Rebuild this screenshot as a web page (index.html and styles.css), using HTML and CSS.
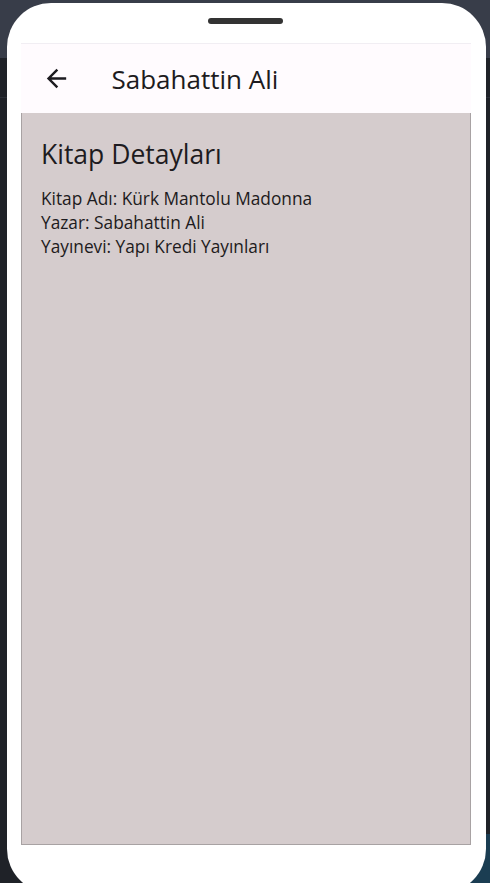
FILE: index.html
```html
<!DOCTYPE html>
<html lang="tr">
<head>
<meta charset="utf-8">
<link rel="stylesheet" href="styles.css">
</head>
<body>
<div class="desk">
  <div class="phone">
    <div class="notch"></div>
    <div class="screen">
      <header class="appbar">
        <svg class="back" viewBox="0 0 24 24" width="29" height="29"><path d="M20 11H7.83l5.59-5.59L12 4l-8 8 8 8 1.41-1.41L7.83 13H20v-2z"/></svg>
        <h1 class="title">Sabahattin Ali</h1>
      </header>
      <main class="content">
        <h2 class="heading">Kitap Detayları</h2>
        <p class="line">Kitap Adı: Kürk Mantolu Madonna</p>
        <p class="line">Yazar: Sabahattin Ali</p>
        <p class="line">Yayınevi: Yapı Kredi Yayınları</p>
      </main>
    </div>
  </div>
</div>
</body>
</html>
```
FILE: styles.css
```css
html, body {
  margin: 0;
  padding: 0;
  height: 883px;
  overflow: hidden;
}
body {
  background:
    linear-gradient(#383d49, #383d49) 0 0 / 100% 58px no-repeat,
    linear-gradient(#2c3038, #2c3038) 0 97px / 100% 1px no-repeat,
    linear-gradient(#1b3d52, #1b3d52) 466px 834px / 24px 49px no-repeat,
    #1f2228;
  font-family: "Open Sans", "Noto Sans", sans-serif;
  color: #1d1b20;
}
.desk {
  padding: 3px 4px 0 7px;
}
.phone {
  position: relative;
  width: 479px;
  height: 890px;
  background: #ffffff;
  border-radius: 44px;
  box-sizing: border-box;
  padding: 40px 15px 0 14px;
}
.notch {
  position: absolute;
  left: 201px;
  top: 14.5px;
  width: 75px;
  height: 6.5px;
  border-radius: 3.5px;
  background: #333333;
}
.screen {
  display: flex;
  flex-direction: column;
  width: 450px;
}
.appbar {
  display: flex;
  align-items: center;
  height: 70px;
  background: #fffbfe;
  border-top: 1px solid #f1eef3;
  box-sizing: border-box;
  padding-left: 20.5px;
}
.back {
  fill: #1d1b20;
  flex: none;
}
.title {
  margin: 0 0 0 41px;
  font-size: 26px;
  font-weight: 400;
  line-height: 32px;
}
.content {
  height: 732px;
  box-sizing: border-box;
  background: #d5cccd;
  border: 1px solid #a8a2a3;
  border-top: none;
  padding: 25px 19px;
}
.heading {
  margin: 0 0 17px;
  font-size: 26.5px;
  font-weight: 400;
  line-height: 32px;
}
.line {
  margin: 0;
  font-size: 17.3px;
  line-height: 24px;
}
```
